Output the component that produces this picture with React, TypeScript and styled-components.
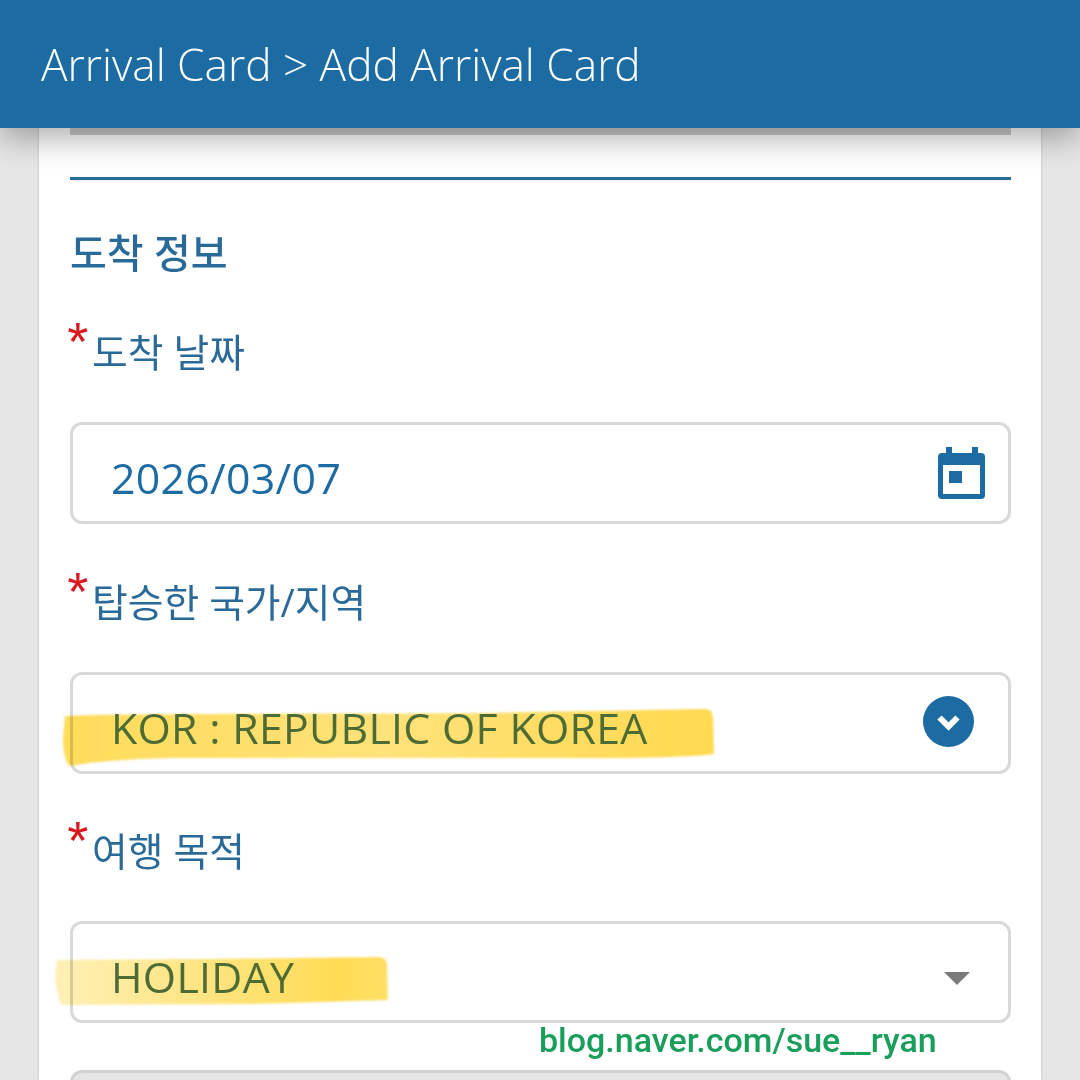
import React from "react";
import styled, { createGlobalStyle } from "styled-components";

const Global = createGlobalStyle`
  html, body { margin: 0; padding: 0; background: #e6e6e6; }
  * { box-sizing: border-box; }
`;

const BLUE = "#1c6ba3";
const KR = `"Open Sans", "Noto Sans CJK KR", sans-serif`;

const Page = styled.div`
  position: relative;
  width: 1080px;
  height: 1080px;
  overflow: hidden;
  background: #e6e6e6;
  font-family: ${KR};
`;
const Header = styled.header`
  position: relative;
  z-index: 2;
  height: 128px;
  display: flex;
  align-items: center;
  padding: 0 0 0 41px;
  background: ${BLUE};
  color: #fff;
  font-size: 44.2px;
  font-weight: 300;
  box-shadow: 0 10px 30px rgba(0, 0, 0, 0.32);
`;
const Card = styled.main`
  width: 1002px;
  height: 952px;
  margin-left: 39px;
  padding: 0 30px 0 31px;
  background: #fff;
  box-shadow: 0 0 2px rgba(0, 0, 0, 0.22);
`;
const Stub = styled.div`
  height: 7px;
  background: #cdcdcd;
`;
const Divider = styled.hr`
  height: 3px;
  margin: 42px 0 0;
  border: 0;
  background: #2a6c99;
`;
const SectionTitle = styled.h2`
  margin: 49px 0 0;
  height: 48px;
  line-height: 48px;
  font-size: 40px;
  font-weight: 500;
  color: #2a6a99;
`;
const Group = styled.section<{ $first?: boolean }>`
  margin-top: ${(p) => (p.$first ? 27 : 29.5)}px;
`;
const Label = styled.div`
  display: flex;
  align-items: flex-start;
  height: 120px;
  color: #2a6a99;
  font-size: 38.8px;
  font-weight: 400;
  line-height: 48px;
`;
const Star = styled.span`
  width: 22px;
  margin-top: 15px;
  text-indent: -5px;
  color: #d8191f;
  font-family: "Liberation Sans", sans-serif;
  font-size: 54px;
  font-style: italic;
  line-height: 44px;
`;
const LabelText = styled.span`
  padding-top: 24px;
`;
const Field = styled.div`
  position: relative;
  display: flex;
  align-items: center;
  justify-content: space-between;
  height: 102px;
  margin-top: -2px;
  padding: 9px 24px 0 38px;
  border: 3px solid #d9d9d9;
  border-radius: 12px;
  background: #fff;
  color: ${BLUE};
  font-size: 42.8px;
  font-weight: 400;
`;
const Value = styled.span<{ $marked?: boolean }>`
  position: relative;
  z-index: 1;
  letter-spacing: 0.3px;
  color: ${(p) => (p.$marked ? "#4d6b35" : "inherit")};
`;
const Highlight = styled.svg<{ $left: number; $top: number }>`
  position: absolute;
  left: ${(p) => p.$left}px;
  top: ${(p) => p.$top}px;
  mix-blend-mode: multiply;
  filter: blur(1.2px);
  pointer-events: none;
`;
const CalendarIcon = styled.svg`
  display: block;
  width: 47px;
  height: 52px;
  margin: -9px -1px 0 0;
`;
const ChevronIcon = styled.svg`
  display: block;
  width: 51px;
  height: 51px;
  margin: -11px 10px 0 0;
`;
const Caret = styled.span`
  width: 0;
  height: 0;
  margin: 4px 14px 0 0;
  border-left: 13px solid transparent;
  border-right: 13px solid transparent;
  border-top: 13px solid #7a7a7a;
`;
const Disabled = styled.div`
  height: 40px;
  margin-top: 47px;
  border: 3px solid #d2d2d2;
  border-radius: 12px;
  background: #e6e6e6;
`;
const Watermark = styled.div`
  position: absolute;
  z-index: 3;
  left: 539px;
  top: 1021px;
  color: #1a9e5c;
  font-family: Roboto, sans-serif;
  font-size: 34px;
  font-weight: 500;
  line-height: 38px;
  white-space: nowrap;
`;

export default function App() {
  return (
    <Page>
      <Global />
      <Header>Arrival Card &gt; Add Arrival Card</Header>
      <Card>
        <Stub />
        <Divider />
        <SectionTitle>도착 정보</SectionTitle>
        <Group $first>
          <Label>
            <Star>*</Star>
            <LabelText>도착 날짜</LabelText>
          </Label>
          <Field>
            <Value>2026/03/07</Value>
            <CalendarIcon viewBox="0 0 47 52">
              <rect x="8" y="0" width="6" height="10" fill={BLUE} />
              <rect x="34" y="0" width="6" height="10" fill={BLUE} />
              <rect x="0" y="6" width="47" height="46" rx="4" fill={BLUE} />
              <rect x="5" y="18" width="37" height="29" fill="#fff" />
              <rect x="11" y="24" width="13" height="12" fill={BLUE} />
            </CalendarIcon>
          </Field>
        </Group>
        <Group>
          <Label>
            <Star>*</Star>
            <LabelText>탑승한 국가/지역</LabelText>
          </Label>
          <Field>
            <Value $marked>KOR : REPUBLIC OF KOREA</Value>
            <ChevronIcon viewBox="0 0 51 51">
              <circle cx="25.5" cy="25.5" r="25.5" fill={BLUE} />
              <path d="M16.5 21.5l9 9 9-9" fill="none" stroke="#fff" strokeWidth="6" />
            </ChevronIcon>
            <Highlight $left={-10} $top={33} width="655" height="62" viewBox="0 0 655 62">
              <defs>
                <linearGradient id="hl1" x1="0" x2="1" y1="0" y2="0">
                  <stop offset="0" stopColor="#ffdc5a" />
                  <stop offset="0.5" stopColor="#ffe27a" />
                  <stop offset="1" stopColor="#ffd94f" />
                </linearGradient>
              </defs>
              <path
                d="M2 8 C60 5 300 6 420 5 L640 1 Q650 0 650 10 L651 46 Q630 49 560 50 L120 50 C70 50 30 54 6 58 Q0 50 0 30Z"
                fill="url(#hl1)"
              />
            </Highlight>
          </Field>
        </Group>
        <Group>
          <Label>
            <Star>*</Star>
            <LabelText>여행 목적</LabelText>
          </Label>
          <Field>
            <Value $marked>HOLIDAY</Value>
            <Caret />
            <Highlight $left={-20} $top={32} width="340" height="52" viewBox="0 0 340 52">
              <defs>
                <linearGradient id="hl2" x1="0" x2="1" y1="0" y2="0">
                  <stop offset="0" stopColor="#fff0b8" />
                  <stop offset="0.3" stopColor="#ffe891" />
                  <stop offset="0.85" stopColor="#ffdc55" />
                  <stop offset="1" stopColor="#ffdf66" />
                </linearGradient>
              </defs>
              <path
                d="M4 4 L150 3 L326 1 Q333 1 334 8 L335 44 L200 48 L8 49 Q2 30 2 20Z"
                fill="url(#hl2)"
              />
            </Highlight>
          </Field>
        </Group>
        <Disabled />
      </Card>
      <Watermark>blog.naver.com/sue__ryan</Watermark>
    </Page>
  );
}
